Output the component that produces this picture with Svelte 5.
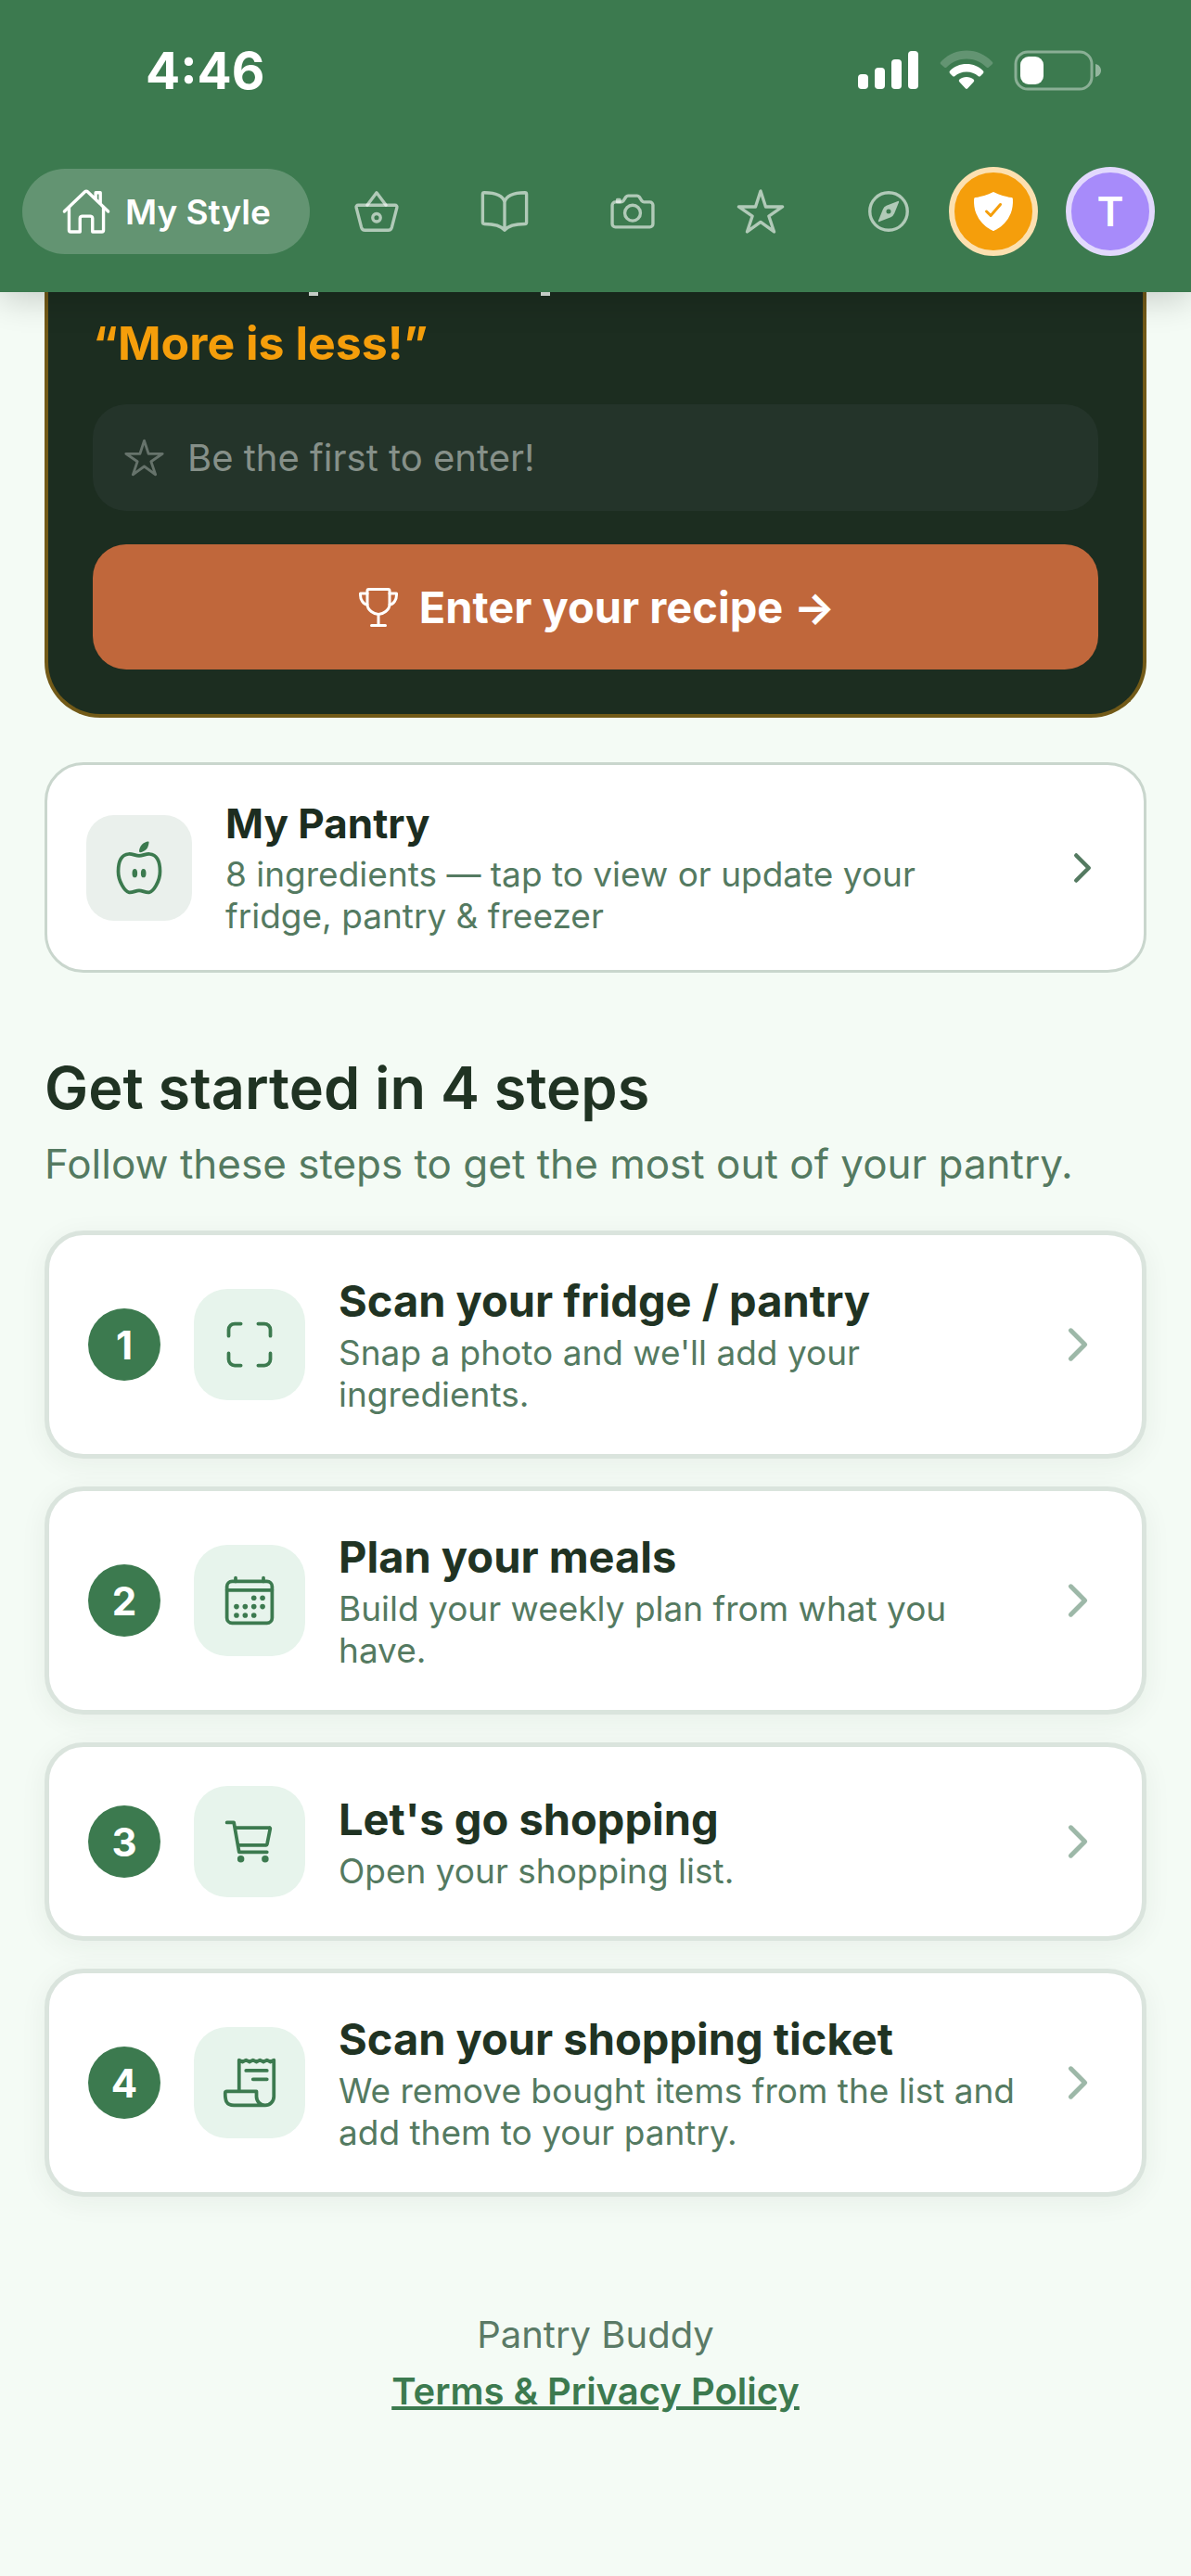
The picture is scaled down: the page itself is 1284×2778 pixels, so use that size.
<script>
  const tabs = [
    { id: "basket", label: "Shopping" },
    { id: "book", label: "Recipes" },
    { id: "camera", label: "Scan" },
    { id: "star", label: "Favourites" },
    { id: "compass", label: "Discover" },
  ];

  const steps = [
    {
      icon: "scan",
      title: "Scan your fridge / pantry",
      text: "Snap a photo and we'll add your ingredients.",
    },
    {
      icon: "calendar",
      title: "Plan your meals",
      text: "Build your weekly plan from what you have.",
    },
    {
      icon: "cart",
      title: "Let's go shopping",
      text: "Open your shopping list.",
    },
    {
      icon: "receipt",
      title: "Scan your shopping ticket",
      text: "We remove bought items from the list and add them to your pantry.",
    },
  ];

  let active = $state("home");
</script>

{#snippet icon(name)}
  <svg class="icon {name}" viewBox="0 0 512 512" aria-hidden="true">
    {#if name == "home"}
      <path d="M80 212v236a16 16 0 0016 16h96V328a24 24 0 0124-24h80a24 24 0 0124 24v136h96a16 16 0 0016-16V212" />
      <path d="M480 256L266.9 52c-5-5.3-16.7-5.3-21.8 0L32 256M400 179V64h-48v69" />
    {:else if name == "basket"}
      <path d="M68 192a20 20 0 00-19.500 25.500L100.500 419a40 40 0 0039 29h233a40 40 0 0039-29l52-201.500A20 20 0 00444 192z" />
      <path d="M160 192l96-128 96 128" />
      <circle cx="256" cy="320" r="40" />
    {:else if name == "book"}
      <path d="M256 160c16-63.200 76.400-95.400 208-96a16 16 0 0116 16v288a16 16 0 01-16 16c-128 0-177.500 25.800-208 64-30.400-38-80-64-208-64-9.900 0-16-8-16-18V80a16 16 0 0116-16c131.600.600 192 32.800 208 96zM256 160v288" />
    {:else if name == "camera"}
      <path d="M350.500 148.700l-26.600-42C318.300 100 310.600 96 302 96h-92c-8.600 0-16.300 4-21.900 10.600l-26.600 42C155.900 155.200 148.600 160 140 160H80a32 32 0 00-32 32v192a32 32 0 0032 32h352a32 32 0 0032-32V192a32 32 0 00-32-32h-59c-8.700 0-16.900-4.800-22.500-11.300z" />
      <circle cx="256" cy="272" r="80" />
      <path d="M124 158v-22h-24v22" />
    {:else if name == "star"}
      <path d="M480 208H308L256 48l-52 160H32l140 96-54 160 138-100 138 100-54-160z" />
    {:else if name == "compass"}
      <circle cx="256" cy="256" r="192" />
      <path
        class="solid"
        d="M350.700 150.900l-117.200 46.900a64 64 0 00-35.700 35.700l-46.900 117.200a8 8 0 0010.400 10.400l117.200-46.900a64 64 0 0035.700-35.700l46.900-117.200a8 8 0 00-10.400-10.400zM256 280a24 24 0 1124-24 24 24 0 01-24 24z"
      />
    {:else if name == "shield"}
      <path
        class="solid"
        d="M479 111.400a16 16 0 00-13-14.800c-86.500-15.500-122.700-26.700-203.400-63.200a16 16 0 00-13.200 0C168.700 69.900 132.600 81.100 46 96.600a16 16 0 00-13 14.800c-3.900 61 4.300 118 24.400 169.200A349.500 349.500 0 00129 393.100c53.500 56.700 110.200 81.400 121 85.700a16 16 0 0012 0c10.800-4.300 67.600-29 121-85.700a349.500 349.500 0 0071.600-112.500c20-51.200 28.200-108.200 24.400-169.200z"
      />
      <path class="check" d="M336 176L225 304l-49-48" />
    {:else if name == "trophy"}
      <path d="M176 464h160M256 464V336M384 224c0-50.600 0-134.600 0-160a16 16 0 00-16-16H144a16 16 0 00-16 16c0 30.200 0 104.200 0 160 0 64 80 112 128 112s128-48.500 128-112z" />
      <path d="M128 96H48v16c0 55.200 33.600 112 80 112M384 96h80v16c0 55.200-33.600 112-80 112" />
    {:else if name == "apple"}
      <path d="M352 128c-32.300-2.900-64 16-96 16s-63.800-19-96-16c-64 5.700-96 64-96 160s64 184 96 192 64-16 96-16 64 24 96 16 96-96 96-192-32-154.300-96-160z" />
      <path
        class="solid"
        d="M324 83c-21 21-43 28-59 29-6 0-9-3-9-9 1-21 9-45 28-64 17-17 36-23 53-26 6-1 10 3 9 9-2 18-8 47-22 61z"
      />
      <ellipse class="seed" cx="216" cy="304" rx="8" ry="24" />
      <ellipse class="seed" cx="296" cy="304" rx="8" ry="24" />
    {:else if name == "scan"}
      <path d="M336 448h56a56 56 0 0056-56v-56M448 176v-56a56 56 0 00-56-56h-56M176 448h-56a56 56 0 01-56-56v-56M64 176v-56a56 56 0 0156-56h56" />
    {:else if name == "calendar"}
      <rect x="48" y="80" width="416" height="384" rx="48" />
      <path d="M128 48v32M384 48v32M464 160H48" />
      {#each [[296, 232], [376, 232], [136, 312], [216, 312], [296, 312], [376, 312], [136, 392], [216, 392], [296, 392]] as [cx, cy]}
        <circle class="solid" {cx} {cy} r="24" />
      {/each}
    {:else if name == "cart"}
      <circle class="seed" cx="176" cy="416" r="16" />
      <circle class="seed" cx="400" cy="416" r="16" />
      <path d="M48 80h64l48 272h256" />
      <path d="M160 288h249.400a8 8 0 007.900-6.400l28.800-144a8 8 0 00-7.900-9.600H128" />
    {:else if name == "receipt"}
      <path d="M160 336V48l32 16 32-16 32 16 32-16 32 16 32-16 32 16 32-16 32 16 32-16v336a80 80 0 01-160 0v-48H48a16 16 0 00-16 16c0 64 6.700 112 80 112h288" />
      <path d="M224 144h192M288 224h128" />
    {:else if name == "chevron"}
      <path d="M184 112l144 144-144 144" />
    {/if}
  </svg>
{/snippet}

<div class="app">
  <header>
    <div class="status">
      <span class="time">4:46</span>
      <div class="indicators">
        <svg width="66" height="44" viewBox="0 0 66 44" aria-hidden="true">
          <rect x="0" y="26" width="11" height="16" rx="4" />
          <rect x="18" y="19" width="11" height="23" rx="4" />
          <rect x="36" y="10" width="11" height="32" rx="4" />
          <rect x="54" y="1" width="11" height="41" rx="4" />
        </svg>
        <svg width="58" height="44" viewBox="0 0 58 44" aria-hidden="true">
          <path class="faint" d="M1.500 15.500a2 2 0 010-3C8.500 5 18 .500 29 .500S49.500 5 56.500 12.500a2 2 0 010 3l-3.500 3a2 2 0 01-2.500 0C44.500 12.500 37 9.500 29 9.500S13.500 12.500 7.500 18.500a2 2 0 01-2.500 0z" />
          <path d="M11 25a2 2 0 010-2.500C15.500 17.500 22 15 29 15s13.500 2.500 18 7.500a2 2 0 010 2.500l-3 3a2 2 0 01-2.500 0C38 25 34 23.500 29 23.500S20 25 16.500 28a2 2 0 01-2.500 0z" />
          <path d="M21.500 34.500a2 2 0 010-3C23.500 30 26 29 29 29s5.500 1 7.500 2.500a2 2 0 010 3l-6.500 7a1.500 1.500 0 01-2 0z" />
        </svg>
        <svg width="96" height="44" viewBox="0 0 96 44" aria-hidden="true">
          <rect class="shell" x="2" y="2" width="82" height="40" rx="13" />
          <rect x="7" y="7" width="25" height="30" rx="9" />
          <path class="nub" d="M88 15c4 1 6 4 6 7s-2 6-6 7z" />
        </svg>
      </div>
    </div>
    <div class="bar">
      <nav>
        <button class="tab home" class:active={active == "home"} onclick={() => (active = "home")}>
          {@render icon("home")}
          <span>My Style</span>
        </button>
        {#each tabs as tab}
          <button
            class="tab"
            class:active={active == tab.id}
            aria-label={tab.label}
            onclick={() => (active = tab.id)}
          >
            {@render icon(tab.id)}
          </button>
        {/each}
      </nav>
      <div class="account">
        <button class="round badge" aria-label="Premium">{@render icon("shield")}</button>
        <button class="round avatar">T</button>
      </div>
    </div>
  </header>

  <main>
    <section class="contest">
      <!-- end of the headline that has scrolled under the bar -->
      <div class="scrolled"><i></i><i></i></div>
      <h2>“More is less!”</h2>
      <div class="entries">
        {@render icon("star")}
        <span>Be the first to enter!</span>
      </div>
      <button class="enter">
        {@render icon("trophy")}
        <span>Enter your recipe →</span>
      </button>
    </section>

    <button class="card pantry">
      <span class="tile">{@render icon("apple")}</span>
      <span class="body">
        <strong>My Pantry</strong>
        <span class="text">8 ingredients — tap to view or update your fridge, pantry &amp; freezer</span>
      </span>
      {@render icon("chevron")}
    </button>

    <h1>Get started in 4 steps</h1>
    <p class="lead">Follow these steps to get the most out of your pantry.</p>

    <div class="steps">
      {#each steps as step, i}
        <button class="card step">
          <span class="number">{i + 1}</span>
          <span class="tile">{@render icon(step.icon)}</span>
          <span class="body">
            <strong>{step.title}</strong>
            <span class="text">{step.text}</span>
          </span>
          {@render icon("chevron")}
        </button>
      {/each}
    </div>
  </main>

  <footer>
    <span>Pantry Buddy</span>
    <a href="#terms">Terms &amp; Privacy Policy</a>
  </footer>
</div>

<style>
  :global(body) {
    margin: 0;
    background: #f4fbf5;
  }
  .app {
    min-height: 100vh;
    background: #f4fbf5;
    font-family: Inter, "Liberation Sans", sans-serif;
    color: #1c2d20;
  }
  button {
    font: inherit;
    color: inherit;
    border: none;
    background: none;
    padding: 0;
    margin: 0;
    cursor: pointer;
  }

  .icon {
    display: block;
    flex: none;
    width: 60px;
    height: 60px;
    fill: none;
    stroke: currentColor;
    stroke-width: 32;
    stroke-linecap: round;
    stroke-linejoin: round;
  }
  .solid {
    fill: currentColor;
    stroke: none;
  }
  .seed {
    fill: currentColor;
  }
  .check {
    stroke: #f59e0b;
  }
  .icon.chevron {
    stroke-width: 48;
  }

  header {
    position: relative;
    z-index: 1;
    background: #3c7a4f;
    color: #fff;
    box-shadow: 0 6px 36px rgba(0, 0, 0, 0.2);
  }
  .status {
    display: flex;
    align-items: center;
    justify-content: space-between;
    height: 152px;
    padding: 0 95px 0 157px;
  }
  .time {
    font-size: 55px;
    font-weight: 700;
  }
  .indicators {
    display: flex;
    gap: 22px;
    fill: #fff;
  }
  .faint {
    opacity: 0.2;
  }
  .shell {
    fill: none;
    stroke: #fff;
    stroke-width: 3;
    opacity: 0.4;
  }
  .nub {
    opacity: 0.45;
  }

  .bar {
    display: flex;
    align-items: center;
    justify-content: space-between;
    padding: 28px 39px 39px 24px;
  }
  nav {
    display: flex;
    gap: 6px;
    min-width: 0;
    overflow: hidden;
  }
  .tab {
    display: flex;
    flex: none;
    align-items: center;
    justify-content: center;
    width: 132px;
    height: 92px;
    border-radius: 46px;
    color: rgba(255, 255, 255, 0.6);
  }
  .tab .icon {
    width: 54px;
    height: 54px;
  }
  .tab.home {
    width: auto;
    gap: 15px;
    padding: 0 42px;
    font-size: 37px;
    font-weight: 600;
  }
  .tab.active {
    background: rgba(255, 255, 255, 0.2);
    color: #fff;
  }
  .account {
    display: flex;
    flex: none;
    gap: 30px;
  }
  .round {
    display: flex;
    align-items: center;
    justify-content: center;
    box-sizing: border-box;
    width: 96px;
    height: 96px;
    border: 6px solid;
    border-radius: 50%;
    color: #fff;
  }
  .round .icon {
    width: 48px;
    height: 48px;
  }
  .badge {
    background: #f59e0b;
    border-color: #fce0b0;
  }
  .avatar {
    background: #a78bfa;
    border-color: #e2d9fd;
    font-size: 44px;
    font-weight: 600;
  }

  main {
    padding: 0 48px;
  }
  .contest {
    padding: 0 48px 48px;
    border: 4px solid #725a18;
    border-top: none;
    border-radius: 0 0 60px 60px;
    background: #1c2d20;
  }
  .scrolled {
    display: flex;
    gap: 240px;
    padding-left: 233px;
  }
  .scrolled i {
    width: 10px;
    height: 4px;
    background: #dfe6e0;
  }
  h2 {
    margin: 21px 0 36px;
    color: #f59e0b;
    font-size: 50px;
    font-weight: 700;
    line-height: 60px;
  }
  .entries {
    display: flex;
    align-items: center;
    gap: 24px;
    padding: 33px;
    border-radius: 36px;
    background: #24342a;
    color: #869089;
    font-size: 40px;
    line-height: 49px;
  }
  .entries .icon {
    width: 45px;
    height: 45px;
    color: #66736b;
  }
  .enter {
    display: flex;
    align-items: center;
    justify-content: center;
    gap: 20px;
    width: 100%;
    margin-top: 36px;
    padding: 39px;
    border-radius: 36px;
    background: #c0673b;
    color: #fff;
    font-size: 47px;
    font-weight: 700;
    line-height: 57px;
  }
  .enter .icon {
    width: 48px;
    height: 48px;
  }

  .card {
    display: flex;
    align-items: center;
    gap: 36px;
    box-sizing: border-box;
    width: 100%;
    background: #fff;
    text-align: left;
    border-radius: 42px;
  }
  .body {
    flex: 1;
    min-width: 0;
  }
  .body strong,
  .body .text {
    display: block;
  }
  .body strong {
    font-weight: 700;
  }
  .body .text {
    margin-top: 5px;
    color: #547a61;
    font-size: 37px;
    line-height: 45px;
  }
  .tile {
    display: flex;
    flex: none;
    align-items: center;
    justify-content: center;
    color: #3c7a4f;
  }
  .pantry {
    margin-top: 48px;
    padding: 36px 42px;
    border: 3px solid #c9d6cd;
  }
  .pantry strong {
    font-size: 44px;
    line-height: 54px;
  }
  .pantry .tile {
    width: 114px;
    height: 114px;
    border-radius: 30px;
    background: #eaf0ec;
  }
  .pantry > :global(.chevron) {
    width: 48px;
    height: 48px;
    color: #547a61;
  }

  h1 {
    margin: 84px 0 12px;
    font-size: 63px;
    font-weight: 600;
    line-height: 80px;
    color: #203323;
  }
  .lead {
    margin: 0 0 42px;
    color: #547a61;
    font-size: 44px;
    line-height: 60px;
  }

  .steps {
    display: flex;
    flex-direction: column;
    gap: 30px;
  }
  .step {
    padding: 42px;
    border: 5px solid #dae4dd;
    box-shadow: 0 6px 30px rgba(28, 45, 32, 0.06);
  }
  .step strong {
    color: #203323;
    font-size: 47px;
    line-height: 57px;
  }
  .step .tile {
    width: 120px;
    height: 120px;
    border-radius: 36px;
    background: #e7f4ec;
  }
  .step > :global(.chevron) {
    width: 54px;
    height: 54px;
    color: #9db8a8;
  }
  .number {
    display: flex;
    flex: none;
    align-items: center;
    justify-content: center;
    width: 78px;
    height: 78px;
    border-radius: 50%;
    background: #3c7a4f;
    color: #fff;
    font-size: 42px;
    font-weight: 700;
  }

  footer {
    display: flex;
    flex-direction: column;
    align-items: center;
    padding: 118px 48px;
    color: #5a7a66;
    font-size: 40px;
    line-height: 61px;
  }
  footer a {
    color: #3c7a4f;
    font-weight: 600;
    text-decoration-thickness: 4px;
  }
</style>
